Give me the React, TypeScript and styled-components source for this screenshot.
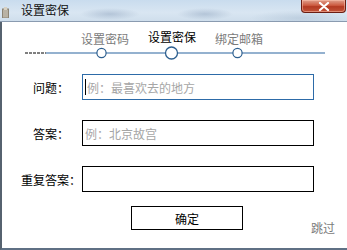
import React from "react";
import styled, { createGlobalStyle } from "styled-components";

const Global = createGlobalStyle`
  html, body { margin: 0; padding: 0; background: #ffffff; }
  body { font-family: "Noto Sans CJK SC", "Noto Sans", sans-serif; }
  * { box-sizing: border-box; }
`;

const Window = styled.div`
  width: 347px;
  height: 250px;
  display: flex;
  flex-direction: column;
  overflow: hidden;
  background: #dbe7f3;
`;

const TitleBar = styled.div`
  height: 22px;
  flex: none;
  display: flex;
  align-items: flex-start;
  background:
    radial-gradient(ellipse 30px 6px at 110px 14px, rgba(150, 170, 195, 0.55), transparent),
    radial-gradient(ellipse 28px 6px at 205px 14px, rgba(150, 170, 195, 0.55), transparent),
    radial-gradient(ellipse 50px 8px at 300px 18px, rgba(170, 190, 210, 0.5), transparent),
    linear-gradient(180deg, #c9dcee 0%, #d9e6f2 60%, #cfdeec 100%);
  border-bottom: 1px solid #8a9bb0;
`;

const AppIcon = styled.svg`
  margin: 7px 0 0 2px;
  flex: none;
`;

const Title = styled.div`
  margin: 2px 0 0 12px;
  font-size: 12px;
  line-height: 16px;
  color: #111;
`;

const CloseButton = styled.div`
  margin-left: auto;
  margin-right: 1px;
  width: 45px;
  height: 13px;
  display: flex;
  align-items: center;
  justify-content: center;
  border: 1px solid #6b1d12;
  border-top: none;
  border-radius: 0 0 4px 4px;
  background: linear-gradient(180deg, #e0a08d 0%, #cc5a40 45%, #b33a22 55%, #c2543a 100%);
  box-shadow: inset 0 0 0 1px rgba(255, 200, 180, 0.5);
`;

const Content = styled.div`
  flex: 1;
  display: flex;
  flex-direction: column;
  background: #ffffff;
  border-left: 2px solid #56626f;
  border-bottom: 2px solid #5f7084;
`;

const StepLabels = styled.div`
  display: flex;
  gap: 19px;
  padding-left: 79px;
  margin-top: 10px;
`;

const StepLabel = styled.div<{ $active?: boolean }>`
  width: 48px;
  text-align: center;
  font-size: 12px;
  line-height: 14px;
  color: ${(p) => (p.$active ? "#000000" : "#7b7b7b")};
  transform: translateY(${(p) => (p.$active ? "-2px" : "0")});
`;

const Track = styled.svg`
  display: block;
  margin-left: -2px;
`;

const Form = styled.div`
  display: flex;
  flex-direction: column;
  gap: 20px;
  margin-top: 14px;
`;

const Row = styled.div`
  display: flex;
  align-items: center;
  height: 26px;
`;

const Label = styled.div`
  width: 62px;
  margin-left: 18px;
  text-align: center;
  font-size: 12px;
  color: #000;
`;

const Field = styled.div<{ $focused?: boolean }>`
  width: 232px;
  height: 26px;
  display: flex;
  align-items: center;
  border: 1px solid ${(p) => (p.$focused ? "#2d6ba8" : "#000000")};
  padding-left: 2px;
  font-size: 12px;
  color: #a6a6a6;
`;

const Caret = styled.span`
  width: 1px;
  height: 16px;
  background: #000;
  margin-right: 1px;
`;

const Footer = styled.div`
  display: flex;
  align-items: flex-start;
  margin-top: 14px;
  padding-left: 129px;
`;

const Button = styled.div`
  width: 112px;
  height: 24px;
  display: flex;
  align-items: center;
  justify-content: center;
  border: 1px solid #000;
  font-size: 12px;
  color: #000;
`;

const Skip = styled.div`
  margin-left: auto;
  margin-right: 12px;
  margin-top: 13px;
  font-size: 12px;
  color: #7b7b7b;
`;

export default function App() {
  return (
    <>
      <Global />
      <Window>
        <TitleBar>
          <AppIcon width="7" height="11" viewBox="0 0 7 11">
            <rect x="0.5" y="2" width="6" height="9" fill="#b9b2a4" stroke="#8c8475" />
            <rect x="2" y="0" width="3" height="3" fill="#d8d1c2" />
          </AppIcon>
          <Title>设置密保</Title>
          <CloseButton>
            <svg width="12" height="9" viewBox="0 0 12 9">
              <path d="M2 1 L10 8 M10 1 L2 8" stroke="#ffffff" strokeWidth="2.2" strokeLinecap="round" />
            </svg>
          </CloseButton>
        </TitleBar>
        <Content>
          <StepLabels>
            <StepLabel>设置密码</StepLabel>
            <StepLabel $active>设置密保</StepLabel>
            <StepLabel>绑定邮箱</StepLabel>
          </StepLabels>
          <Track width="347" height="14" viewBox="0 0 347 14">
            <line x1="25" y1="7" x2="46" y2="7" stroke="#000" strokeWidth="1" strokeDasharray="3 1" />
            <line x1="46" y1="7" x2="325" y2="7" stroke="#2a65a0" strokeWidth="1.2" />
            <circle cx="101.5" cy="7" r="4.6" fill="#fff" stroke="#2d5f8f" strokeWidth="1.2" />
            <circle cx="171.5" cy="7" r="6" fill="#fff" stroke="#2d5f8f" strokeWidth="1.3" />
            <circle cx="237.5" cy="7" r="4.6" fill="#fff" stroke="#2d5f8f" strokeWidth="1.2" />
          </Track>
          <Form>
            <Row>
              <Label>问题：</Label>
              <Field $focused>
                <Caret />
                例：最喜欢去的地方
              </Field>
            </Row>
            <Row>
              <Label>答案：</Label>
              <Field>例：北京故宫</Field>
            </Row>
            <Row>
              <Label>重复答案：</Label>
              <Field />
            </Row>
          </Form>
          <Footer>
            <Button>确定</Button>
            <Skip>跳过</Skip>
          </Footer>
        </Content>
      </Window>
    </>
  );
}
